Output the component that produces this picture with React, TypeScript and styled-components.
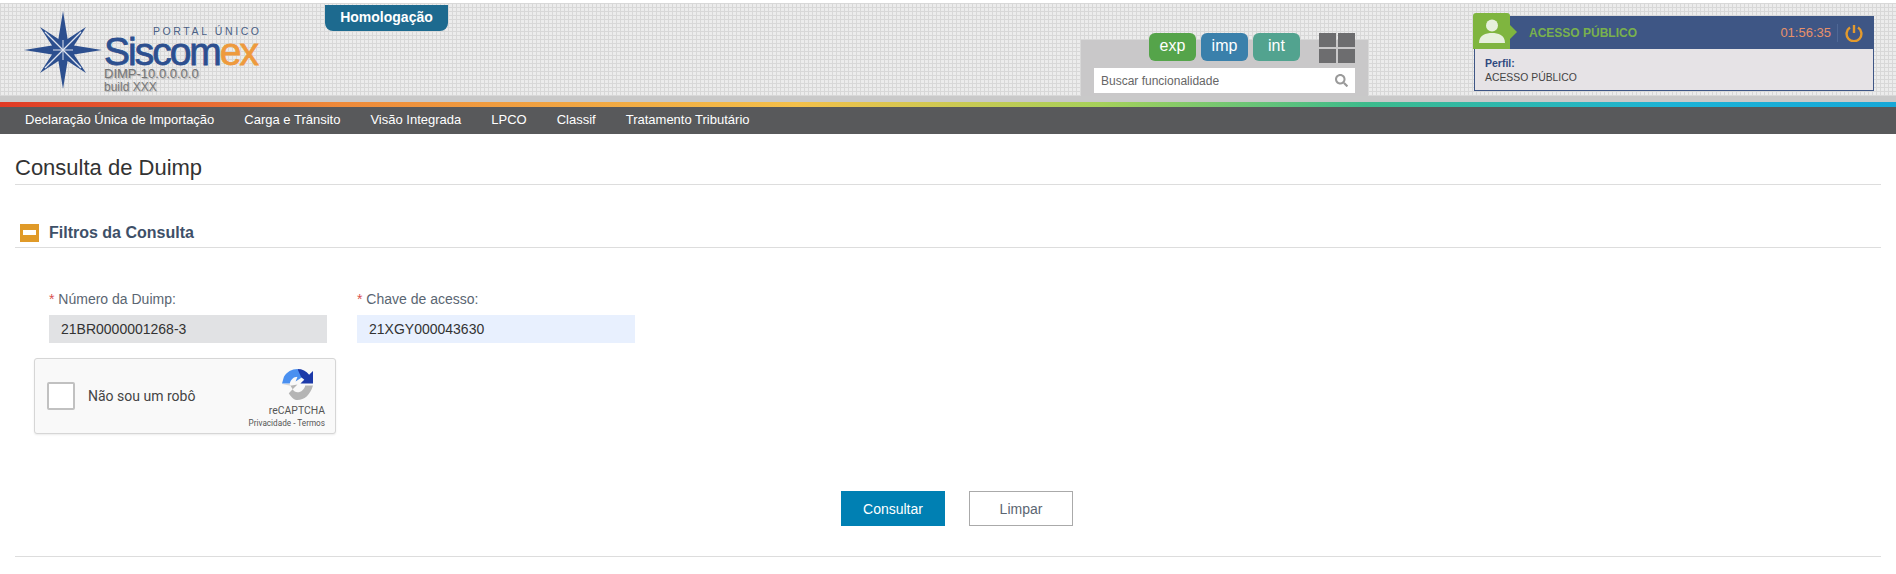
// App.tsx

import React from 'react';
import styled, { createGlobalStyle } from 'styled-components';
import { FaSearch } from 'react-icons/fa';

const menu = [
  'Declaração Única de Importação',
  'Carga e Trânsito',
  'Visão Integrada',
  'LPCO',
  'Classif',
  'Tratamento Tributário'
];

const App: React.FC = () => {
  return (
    <>
      <EstiloGlobal />
      <Header>
        <Logo>
          <svg width="80" height="80" viewBox="0 0 80 80">
            <path fill="#2c4f8f" d="M40 1 L44.6 29 L63 17 L51 35.4 L79 40 L51 44.6 L63 63 L44.6 51 L40 79 L35.4 51 L17 63 L29 44.6 L1 40 L29 35.4 L17 17 L35.4 29 Z" />
            <path stroke="#dfe4ee" strokeWidth="1.3" fill="none" d="M22 22 L58 58 M58 22 L22 58" />
            <path stroke="#dfe4ee" strokeWidth="1" fill="none" d="M40 30 V50 M30 40 H50" />
          </svg>
          <LogoTexto>
            <PortalUnico>PORTAL ÚNICO</PortalUnico>
            <Siscomex>Siscom<LaranjaLogo>ex</LaranjaLogo></Siscomex>
            <Versao>DIMP-10.0.0.0.0</Versao>
            <Build>build XXX</Build>
          </LogoTexto>
        </Logo>
        <TagAmbiente>Homologação</TagAmbiente>
        <Spacer />
        <PainelBusca>
          <LinhaModulos>
            <Modulos>
              <Modulo $cor="#55a44a">exp</Modulo>
              <Modulo $cor="#3a80ab">imp</Modulo>
              <Modulo $cor="#52a38f">int</Modulo>
            </Modulos>
            <IconeGrade>
              <span /><span /><span /><span />
            </IconeGrade>
          </LinhaModulos>
          <CampoBusca>
            <span>Buscar funcionalidade</span>
            <FaSearch size={13} color="#9a9a9a" />
          </CampoBusca>
        </PainelBusca>
        <CaixaUsuario>
          <TopoUsuario>
            <AvatarUsuario>
              <svg width="26" height="26" viewBox="0 0 26 26">
                <circle cx="13" cy="7.5" r="6" fill="#e6f0dc" />
                <path fill="#e6f0dc" d="M0 25 C0 17 7 15 13 15 C19 15 26 17 26 25 Z" />
              </svg>
            </AvatarUsuario>
            <NomeAcesso>ACESSO PÚBLICO</NomeAcesso>
            <Relogio>01:56:35</Relogio>
            <BotaoSair>
              <svg width="18" height="18" viewBox="0 0 18 18" fill="none" stroke="#e39a2d" strokeWidth="2.4">
                <path d="M9 1 V9" />
                <path d="M5 3.6 A7.4 7.4 0 1 0 13 3.6" />
              </svg>
            </BotaoSair>
          </TopoUsuario>
          <CorpoUsuario>
            <strong>Perfil:</strong>
            <span>ACESSO PÚBLICO</span>
          </CorpoUsuario>
        </CaixaUsuario>
      </Header>
      <FaixaCinza />
      <FaixaGradiente />
      <Menu>
        {menu.map((item) => (
          <ItemMenu key={item}>{item}</ItemMenu>
        ))}
      </Menu>
      <Conteudo>
        <Titulo>Consulta de Duimp</Titulo>
        <Secao>
          <IconeMenos />
          <h2>Filtros da Consulta</h2>
        </Secao>
        <Campos>
          <Campo>
            <Rotulo>Número da Duimp:</Rotulo>
            <Entrada $fundo="#e1e2e4">21BR0000001268-3</Entrada>
          </Campo>
          <Campo>
            <Rotulo>Chave de acesso:</Rotulo>
            <Entrada $fundo="#e8f0fe">21XGY000043630</Entrada>
          </Campo>
        </Campos>
        <Captcha>
          <CaixaCheck />
          <TextoCheck>Não sou um robô</TextoCheck>
          <MarcaCaptcha>
            <svg width="31" height="31" viewBox="0 0 32 32">
              <path fill="#1c3aa9" d="M16 0 C21 0 25 2 28 6 L32 2 V15 H19 L23 11 C21 9 19 8 17 8 L16 8 Z" />
              <path fill="#4a90f0" d="M16 0 C10 0 5 3 2 8 L0 15 H9 L8 15 C9 11 12 8 16 8 L14 13 L20 9 Z" />
              <path fill="#b5b5b5" d="M0 16 H8 L11 21 L7 25 C10 30 13 32 16 32 C23 32 29 27 32 17 H24 C23 21 20 24 16 24 C14 24 12 23 11 21 L16 16 L10 17 Z" />
            </svg>
            <NomeCaptcha>reCAPTCHA</NomeCaptcha>
            <LinksCaptcha>Privacidade - Termos</LinksCaptcha>
          </MarcaCaptcha>
        </Captcha>
        <Acoes>
          <BotaoAcao $primario>Consultar</BotaoAcao>
          <BotaoAcao>Limpar</BotaoAcao>
        </Acoes>
        <LinhaFinal />
      </Conteudo>
    </>
  );
};

const EstiloGlobal = createGlobalStyle`
  html, body {
    margin: 0;
    padding: 0;
    background: #ffffff;
    font-family: "Liberation Sans", Arial, sans-serif;
    overflow: hidden;
  }
`;

const Header = styled.header`
  display: flex;
  align-items: flex-start;
  height: 93px;
  margin-top: 3px;
  background-color: #ececec;
  background-image:
    linear-gradient(to right, #d8d8d8 1px, transparent 1px),
    linear-gradient(to bottom, #d8d8d8 1px, transparent 1px);
  background-size: 4px 4px;
`;

const Logo = styled.div`
  display: flex;
  width: 302px;
  margin-left: 23px;
  padding-top: 7px;
  box-sizing: border-box;
`;

const LogoTexto = styled.div`
  display: flex;
  flex-direction: column;
  margin-left: 1px;
  padding-top: 16px;
`;

const PortalUnico = styled.div`
  margin-left: 49px;
  font-size: 10.5px;
  line-height: 10px;
  letter-spacing: 2.6px;
  color: #4a5f85;
  white-space: nowrap;
`;

const Siscomex = styled.div`
  font-size: 39px;
  line-height: 31px;
  letter-spacing: -2px;
  -webkit-text-stroke: 0.8px #2c4f8f;
  color: #2c4f8f;
  white-space: nowrap;
`;

const LaranjaLogo = styled.span`
  color: #ee9a3d;
  -webkit-text-stroke: 0.8px #ee9a3d;
`;

const Versao = styled.div`
  font-size: 13px;
  line-height: 13px;
  color: #777;
  text-shadow: 1px 1px 1px rgba(0, 0, 0, 0.25);
`;

const Build = styled.div`
  font-size: 12px;
  line-height: 14px;
  color: #777;
  text-shadow: 1px 1px 1px rgba(0, 0, 0, 0.2);
`;

const TagAmbiente = styled.div`
  width: 123px;
  height: 26px;
  margin-top: 2px;
  background: #1d6a8f;
  border-radius: 0 0 8px 8px;
  color: #ffffff;
  font-size: 14px;
  font-weight: 700;
  line-height: 24px;
  text-align: center;
`;

const Spacer = styled.div`
  flex: 1;
`;

const PainelBusca = styled.div`
  display: flex;
  flex-direction: column;
  align-items: flex-end;
  width: 287px;
  height: 56px;
  margin-top: 37px;
  margin-right: 105px;
  padding-right: 13px;
  box-sizing: border-box;
  background: #c9c8c9;
`;

const LinhaModulos = styled.div`
  display: flex;
  justify-content: space-between;
  width: 206px;
  height: 35px;
  margin-top: -7px;
`;

const Modulos = styled.div`
  display: flex;
  gap: 5px;
`;

const Modulo = styled.div<{ $cor: string }>`
  width: 47px;
  height: 28px;
  background: ${(p) => p.$cor};
  border-radius: 6px;
  color: #ffffff;
  font-size: 16px;
  line-height: 26px;
  text-align: center;
`;

const IconeGrade = styled.div`
  display: grid;
  grid-template-columns: 17px 17px;
  grid-template-rows: 14px 14px;
  gap: 2px;

  span {
    background: #6d6d6f;
  }
`;

const CampoBusca = styled.div`
  display: flex;
  align-items: center;
  justify-content: space-between;
  width: 261px;
  height: 25px;
  padding: 0 7px;
  box-sizing: border-box;
  background: #ffffff;
  color: #666;
  font-size: 12px;
`;

const CaixaUsuario = styled.div`
  width: 401px;
  margin-top: 10px;
  margin-right: 22px;
`;

const TopoUsuario = styled.div`
  display: flex;
  align-items: center;
  height: 33px;
  margin-top: 3px;
  margin-left: 3px;
  background: #3e5685;
`;

const AvatarUsuario = styled.div`
  position: relative;
  display: flex;
  align-items: center;
  justify-content: center;
  width: 37px;
  height: 36px;
  margin-top: -3px;
  margin-left: -3px;
  background: #7fb53f;
  border-radius: 3px 3px 0 0;

  &::after {
    content: '';
    position: absolute;
    right: -7px;
    top: 12px;
    border-left: 7px solid #7fb53f;
    border-top: 7px solid transparent;
    border-bottom: 7px solid transparent;
  }
`;

const NomeAcesso = styled.div`
  flex: 1;
  margin-left: 19px;
  color: #79b14d;
  font-size: 12px;
  font-weight: 700;
`;

const Relogio = styled.div`
  padding-right: 6px;
  border-right: 1px solid #4f6896;
  color: #e8916a;
  font-size: 13px;
  line-height: 18px;
`;

const BotaoSair = styled.div`
  display: flex;
  margin: 0 11px 0 7px;
`;

const CorpoUsuario = styled.div`
  display: flex;
  flex-direction: column;
  gap: 3px;
  height: 42px;
  margin-left: 1px;
  padding: 8px 0 0 10px;
  box-sizing: border-box;
  background: #e6e3e6;
  border: 1px solid #3e5685;
  border-top: 0;
  color: #444;
  font-size: 10.4px;

  strong {
    color: #2f4a80;
    font-size: 10.5px;
  }
`;

const FaixaCinza = styled.div`
  height: 6px;
  background: #c9c9c9;
`;

const FaixaGradiente = styled.div`
  height: 5px;
  background: linear-gradient(to right, #e03a25 0%, #ee8a3a 18%, #f4c04a 42%, #a6d15a 58%, #3dbb8c 72%, #1cb3d6 88%, #17a8d8 100%);
`;

const Menu = styled.nav`
  display: flex;
  gap: 30px;
  height: 27px;
  padding-left: 25px;
  background: #58595b;
`;

const ItemMenu = styled.div`
  color: #ffffff;
  font-size: 13px;
  line-height: 26px;
  white-space: nowrap;
`;

const Conteudo = styled.main`
  padding: 0 15px;
`;

const Titulo = styled.h1`
  margin: 0;
  height: 51px;
  padding-top: 21px;
  box-sizing: border-box;
  border-bottom: 1px solid #dddddd;
  color: #333333;
  font-size: 22px;
  font-weight: 400;
  line-height: 26px;
`;

const Secao = styled.div`
  display: flex;
  align-items: center;
  gap: 10px;
  height: 29px;
  margin-top: 33px;
  padding: 0 5px;
  border-bottom: 1px solid #dddddd;

  h2 {
    margin: 0;
    color: #3e5068;
    font-size: 16px;
    font-weight: 700;
  }
`;

const IconeMenos = styled.span`
  display: flex;
  align-items: center;
  justify-content: center;
  width: 19px;
  height: 18px;
  background: #e09a28;

  &::after {
    content: '';
    width: 13px;
    height: 5px;
    background: #ffffff;
  }
`;

const Campos = styled.div`
  display: flex;
  gap: 30px;
  margin-top: 42px;
  margin-left: 34px;
`;

const Campo = styled.div`
  display: flex;
  flex-direction: column;
  width: 278px;
`;

const Rotulo = styled.label`
  height: 25px;
  color: #5a6672;
  font-size: 14px;
  line-height: 18px;

  &::before {
    content: '* ';
    color: #d9534f;
  }
`;

const Entrada = styled.div<{ $fundo: string }>`
  height: 28px;
  padding-left: 12px;
  background: ${(p) => p.$fundo};
  color: #333;
  font-size: 14px;
  line-height: 28px;
`;

const Captcha = styled.div`
  display: flex;
  align-items: center;
  width: 302px;
  height: 76px;
  margin-top: 15px;
  margin-left: 19px;
  padding-left: 12px;
  box-sizing: border-box;
  background: #f9f9f9;
  border: 1px solid #d6d6d6;
  border-radius: 3px;
  box-shadow: 0 1px 2px rgba(0, 0, 0, 0.08);
`;

const CaixaCheck = styled.div`
  width: 28px;
  height: 28px;
  box-sizing: border-box;
  background: #ffffff;
  border: 2px solid #c1c1c1;
  border-radius: 2px;
`;

const TextoCheck = styled.div`
  flex: 1;
  margin-left: 13px;
  color: #444;
  font-family: Roboto, sans-serif;
  font-size: 14px;
`;

const MarcaCaptcha = styled.div`
  display: flex;
  flex-direction: column;
  align-items: flex-end;
  width: 80px;
  margin-right: 10px;
  padding-top: 6px;
  font-family: Roboto, sans-serif;

  svg {
    margin-right: 12px;
  }
`;

const NomeCaptcha = styled.div`
  margin-top: 4px;
  color: #555;
  font-size: 10.4px;
  line-height: 13px;
`;

const LinksCaptcha = styled.div`
  color: #555;
  font-size: 8.2px;
  line-height: 12px;
  white-space: nowrap;
`;

const Acoes = styled.div`
  display: flex;
  justify-content: center;
  gap: 24px;
  margin-top: 57px;
  padding-left: 18px;
`;

const BotaoAcao = styled.button<{ $primario?: boolean }>`
  width: 104px;
  height: 35px;
  padding: 0;
  background: ${(p) => (p.$primario ? '#0080b3' : '#ffffff')};
  border: ${(p) => (p.$primario ? '0' : '1px solid #aaaaaa')};
  color: ${(p) => (p.$primario ? '#ffffff' : '#5b6672')};
  font-family: inherit;
  font-size: 14px;
`;

const LinhaFinal = styled.div`
  margin-top: 30px;
  border-top: 1px solid #dddddd;
`;

export default App;
